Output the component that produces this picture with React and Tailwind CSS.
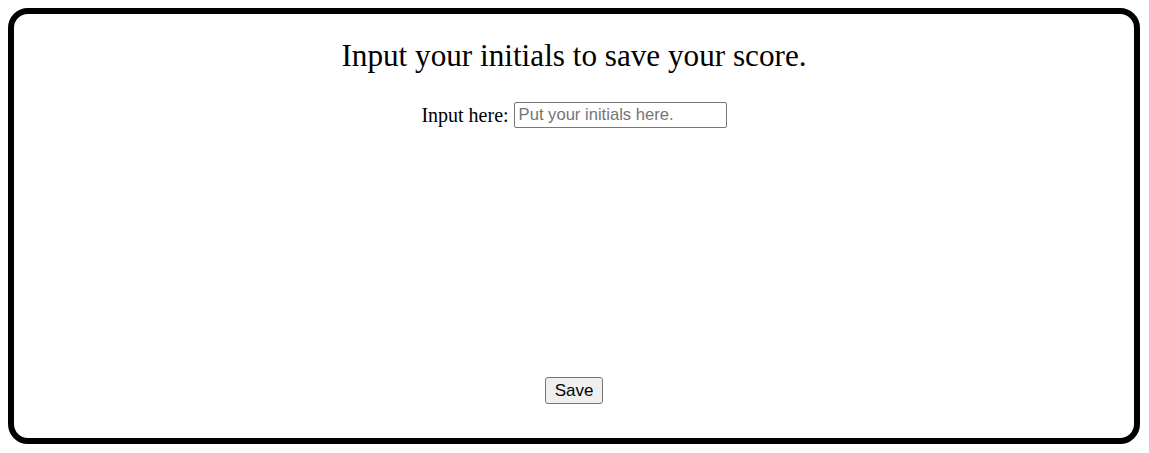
export default function App() {
  return (
    <div className="p-2 bg-white">
      <div className="h-[436px] w-[1132px] border-[6px] border-black rounded-[20px] flex flex-col items-center" style={{ fontFamily: '"Liberation Serif", serif' }}>
        <h1 className="mt-[24px] text-[31.2px] leading-[36px] text-black">
          Input your initials to save your score.
        </h1>
        <div className="mt-[28px] flex items-center gap-[5px]">
          <label htmlFor="initials" className="text-[20px] leading-[23px] text-black">Input here:</label>
          <input
            id="initials"
            type="text"
            placeholder="Put your initials here."
            className="w-[213px] h-[26px] px-[4px] border border-[#767676] rounded-[2px] text-[16.6px] text-black placeholder:text-[#757575] outline-none"
            style={{ fontFamily: '"Liberation Sans", Arial, sans-serif' }}
          />
        </div>
        <div className="flex-1" />
        <button
          className="mb-[34px] w-[58px] h-[27px] bg-[#efefef] border border-[#767676] rounded-[3px] text-[17px] leading-none text-black"
          style={{ fontFamily: '"Liberation Sans", Arial, sans-serif' }}
        >
          Save
        </button>
      </div>
    </div>
  )
}
